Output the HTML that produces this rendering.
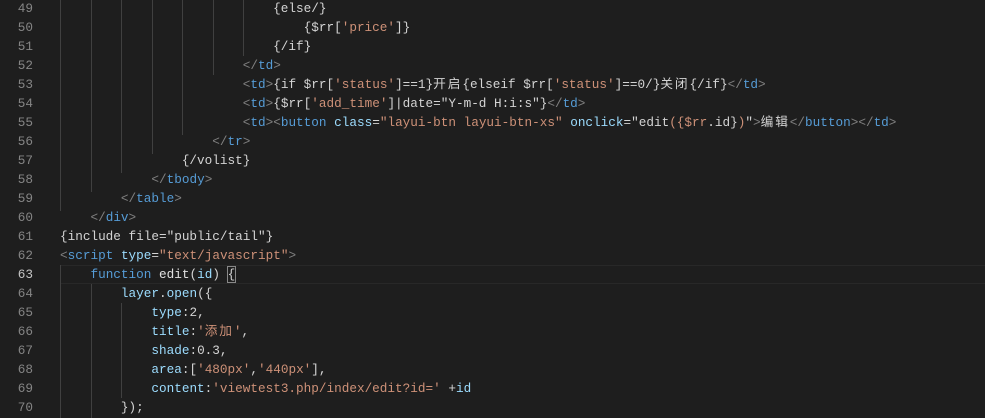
<!DOCTYPE html>
<html><head><meta charset="utf-8"><style>
body{margin:0;background:#1e1e1e;width:985px;height:418px;overflow:hidden;position:relative;font-family:"Liberation Mono","Noto Sans CJK SC",monospace;font-size:12.7px;}
.l{position:absolute;left:0;height:19px;line-height:19px;white-space:pre;color:#d4d4d4;width:985px}
.n{position:absolute;left:0;width:33px;text-align:right;color:#858585}
.c{position:absolute;left:60px}
.g{color:#808080}.t{color:#569cd6}.a{color:#9cdcfe}.s{color:#ce9178}.k{color:#569cd6}.f{color:#dcdcaa}
.z{letter-spacing:1.9px}
.guide{position:absolute;width:1px;background:#404040}
.cur{position:absolute;left:60px;right:0;border-top:1px solid #282828;border-bottom:1px solid #282828}
</style></head><body>
<div class="cur" style="top:265px;height:17px"></div>
<div class="guide" style="left:60px;top:0;height:211px"></div>
<div class="guide" style="left:91px;top:0;height:192px"></div>
<div class="guide" style="left:121px;top:0;height:173px"></div>
<div class="guide" style="left:152px;top:0;height:154px"></div>
<div class="guide" style="left:182px;top:0;height:135px"></div>
<div class="guide" style="left:213px;top:0;height:75px"></div>
<div class="guide" style="left:243px;top:0;height:56px"></div>
<div class="guide" style="left:60px;top:265px;height:153px"></div>
<div class="guide" style="left:91px;top:284px;height:134px"></div>
<div class="guide" style="left:121px;top:303px;height:95px"></div>

<div class="l" style="top:-1px"><span class="n">49</span><span class="c">                            {else/}</span></div>
<div class="l" style="top:18px"><span class="n">50</span><span class="c">                                {$rr[<span class="s">'price'</span>]}</span></div>
<div class="l" style="top:37px"><span class="n">51</span><span class="c">                            {/if}</span></div>
<div class="l" style="top:56px"><span class="n">52</span><span class="c">                        <span class="g">&lt;/</span><span class="t">td</span><span class="g">&gt;</span></span></div>
<div class="l" style="top:75px"><span class="n">53</span><span class="c">                        <span class="g">&lt;</span><span class="t">td</span><span class="g">&gt;</span>{if $rr[<span class="s">'status'</span>]==1}<span class="z">开启</span>{elseif $rr[<span class="s">'status'</span>]==0/}<span class="z">关闭</span>{/if}<span class="g">&lt;/</span><span class="t">td</span><span class="g">&gt;</span></span></div>
<div class="l" style="top:94px"><span class="n">54</span><span class="c">                        <span class="g">&lt;</span><span class="t">td</span><span class="g">&gt;</span>{$rr[<span class="s">'add_time'</span>]|date="Y-m-d H:i:s"}<span class="g">&lt;/</span><span class="t">td</span><span class="g">&gt;</span></span></div>
<div class="l" style="top:113px"><span class="n">55</span><span class="c">                        <span class="g">&lt;</span><span class="t">td</span><span class="g">&gt;&lt;</span><span class="t">button</span> <span class="a">class</span>=<span class="s">"layui-btn layui-btn-xs"</span> <span class="a">onclick</span>="edit<span class="s">({$rr</span>.id}<span class="s">)</span>"<span class="g">&gt;</span><span class="z">编辑</span><span class="g">&lt;/</span><span class="t">button</span><span class="g">&gt;&lt;/</span><span class="t">td</span><span class="g">&gt;</span></span></div>
<div class="l" style="top:132px"><span class="n">56</span><span class="c">                    <span class="g">&lt;/</span><span class="t">tr</span><span class="g">&gt;</span></span></div>
<div class="l" style="top:151px"><span class="n">57</span><span class="c">                {/volist}</span></div>
<div class="l" style="top:170px"><span class="n">58</span><span class="c">            <span class="g">&lt;/</span><span class="t">tbody</span><span class="g">&gt;</span></span></div>
<div class="l" style="top:189px"><span class="n">59</span><span class="c">        <span class="g">&lt;/</span><span class="t">table</span><span class="g">&gt;</span></span></div>
<div class="l" style="top:208px"><span class="n">60</span><span class="c">    <span class="g">&lt;/</span><span class="t">div</span><span class="g">&gt;</span></span></div>
<div class="l" style="top:227px"><span class="n">61</span><span class="c">{include file="public/tail"}</span></div>
<div class="l" style="top:246px"><span class="n">62</span><span class="c"><span class="g">&lt;</span><span class="t">script</span> <span class="a">type</span>=<span class="s">"text/javascript"</span><span class="g">&gt;</span></span></div>
<div class="l" style="top:265px"><span class="n" style="color:#c6c6c6">63</span><span class="c">    <span class="k">function</span> <span style="color:#e0e0e0">edit</span>(<span class="a">id</span>) <span style="outline:1px solid #888">{</span></span></div>
<div class="l" style="top:284px"><span class="n">64</span><span class="c">        <span class="a">layer</span>.<span class="a">open</span>({</span></div>
<div class="l" style="top:303px"><span class="n">65</span><span class="c">            <span class="a">type</span>:2,</span></div>
<div class="l" style="top:322px"><span class="n">66</span><span class="c">            <span class="a">title</span>:<span class="s">'<span class="z">添加</span>'</span>,</span></div>
<div class="l" style="top:341px"><span class="n">67</span><span class="c">            <span class="a">shade</span>:0.3,</span></div>
<div class="l" style="top:360px"><span class="n">68</span><span class="c">            <span class="a">area</span>:[<span class="s">'480px'</span>,<span class="s">'440px'</span>],</span></div>
<div class="l" style="top:379px"><span class="n">69</span><span class="c">            <span class="a">content</span>:<span class="s">'viewtest3.php/index/edit?id='</span> +<span class="a">id</span></span></div>
<div class="l" style="top:398px"><span class="n">70</span><span class="c">        });</span></div>
</body></html>
